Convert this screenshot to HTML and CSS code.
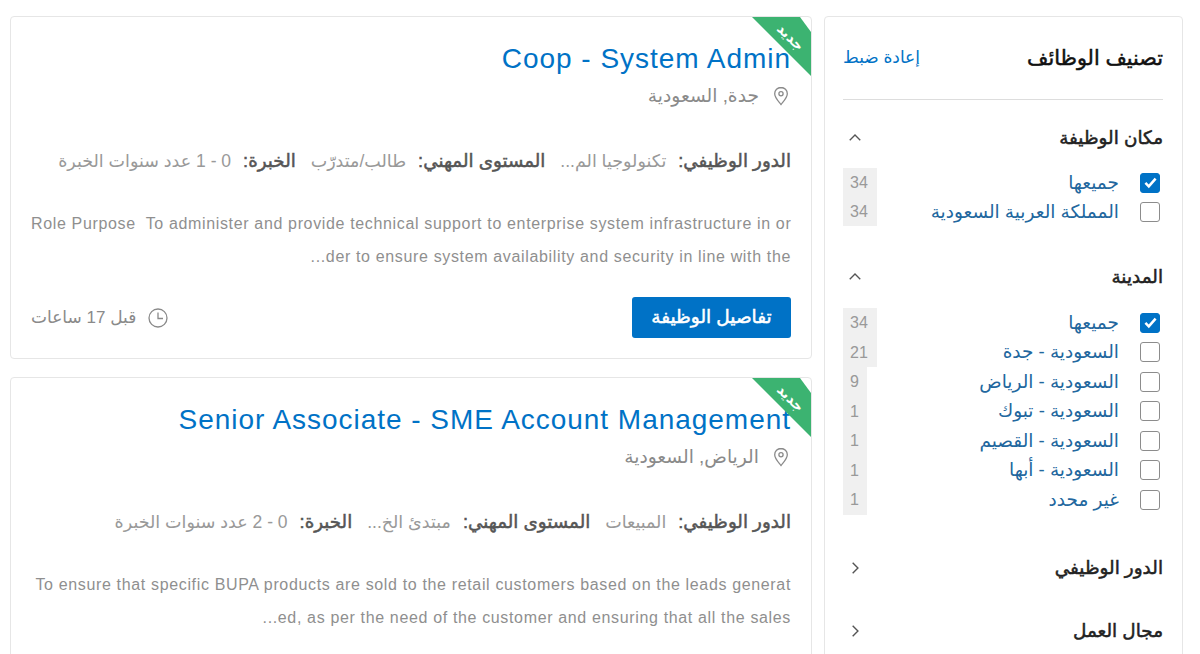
FILE: index.html
```html
<!DOCTYPE html>
<html lang="ar" dir="rtl">
<head>
    <meta charset="UTF-8">
    <title>الوظائف</title>
    <link rel="stylesheet" href="styles.css">
</head>
<body>
    <section class="page">
        <aside class="filters">
            <div class="filters_head">
                <h2>تصنيف الوظائف</h2>
                <a class="reset" href="#">إعادة ضبط</a>
            </div>

            <div class="group">
                <div class="group_head">
                    <h3>مكان الوظيفة</h3>
                    <svg class="chev" viewBox="0 0 12 12"><path d="M1.500 8 6 3.500 10.500 8"/></svg>
                </div>
                <ul class="options tight">
                    <li class="on"><span class="box"><svg viewBox="0 0 20 20"><path d="M4 10.500 8 14.500 16 5.500"/></svg></span><a href="#">جميعها</a><span class="count">34</span></li>
                    <li><span class="box"></span><a href="#">المملكة العربية السعودية</a><span class="count">34</span></li>
                </ul>
            </div>

            <div class="group city">
                <div class="group_head">
                    <h3>المدينة</h3>
                    <svg class="chev" viewBox="0 0 12 12"><path d="M1.500 8 6 3.500 10.500 8"/></svg>
                </div>
                <ul class="options">
                    <li class="on"><span class="box"><svg viewBox="0 0 20 20"><path d="M4 10.500 8 14.500 16 5.500"/></svg></span><a href="#">جميعها</a><span class="count">34</span></li>
                    <li><span class="box"></span><a href="#">السعودية - جدة</a><span class="count">21</span></li>
                    <li><span class="box"></span><a href="#">السعودية - الرياض</a><span class="count small">9</span></li>
                    <li><span class="box"></span><a href="#">السعودية - تبوك</a><span class="count small">1</span></li>
                    <li><span class="box"></span><a href="#">السعودية - القصيم</a><span class="count small">1</span></li>
                    <li><span class="box"></span><a href="#">السعودية - أبها</a><span class="count small">1</span></li>
                    <li><span class="box"></span><a href="#">غير محدد</a><span class="count small">1</span></li>
                </ul>
            </div>

            <div class="group closed">
                <div class="group_head">
                    <h3>الدور الوظيفي</h3>
                    <svg class="chev" viewBox="0 0 12 12"><path d="M4 1.500 8.500 6 4 10.500"/></svg>
                </div>
            </div>

            <div class="group closed">
                <div class="group_head">
                    <h3>مجال العمل</h3>
                    <svg class="chev" viewBox="0 0 12 12"><path d="M4 1.500 8.500 6 4 10.500"/></svg>
                </div>
            </div>
        </aside>

        <main class="jobs">
            <article class="job">
                <span class="ribbon"><span>جديد</span></span>
                <h1 dir="ltr"><a href="#">Coop - System Admin</a></h1>
                <p class="place">
                    <svg viewBox="0 0 20 20"><path d="M10 1.500c-3.600 0-6.300 2.700-6.300 6.200 0 4 4.100 7.900 6.300 10.800 2.200-2.900 6.300-6.800 6.300-10.800 0-3.500-2.700-6.200-6.300-6.200z"/><circle cx="10" cy="7.700" r="2.100"/></svg>
                    جدة, السعودية
                </p>
                <p class="meta">
                    <b>الدور الوظيفي:</b><span class="val">تكنولوجيا الم...</span>
                    <b>المستوى المهني:</b><span class="val">طالب/متدرّب</span>
                    <b>الخبرة:</b><span class="val">0 - 1 عدد سنوات الخبرة</span>
                </p>
                <p class="desc" dir="ltr">Role Purpose&nbsp; To administer and provide technical support to enterprise system infrastructure in or<br>...der to ensure system availability and security in line with the</p>
                <div class="job_foot">
                    <a class="details" href="#">تفاصيل الوظيفة</a>
                    <span class="time">
                        <svg viewBox="0 0 20 20"><circle cx="10" cy="10" r="9"/><path d="M10 4.500V10.500H15"/></svg>
                        قبل 17 ساعات
                    </span>
                </div>
            </article>

            <article class="job">
                <span class="ribbon"><span>جديد</span></span>
                <h1 dir="ltr"><a href="#">Senior Associate - SME Account Management</a></h1>
                <p class="place">
                    <svg viewBox="0 0 20 20"><path d="M10 1.500c-3.600 0-6.300 2.700-6.300 6.200 0 4 4.100 7.900 6.300 10.800 2.200-2.900 6.300-6.800 6.300-10.800 0-3.500-2.700-6.200-6.300-6.200z"/><circle cx="10" cy="7.700" r="2.100"/></svg>
                    الرياض, السعودية
                </p>
                <p class="meta">
                    <b>الدور الوظيفي:</b><span class="val">المبيعات</span>
                    <b>المستوى المهني:</b><span class="val">مبتدئ الخ...</span>
                    <b>الخبرة:</b><span class="val">0 - 2 عدد سنوات الخبرة</span>
                </p>
                <p class="desc" dir="ltr">To ensure that specific BUPA products are sold to the retail customers based on the leads generat<br>...ed, as per the need of the customer and ensuring that all the sales</p>
            </article>
        </main>
    </section>
</body>
</html>
```

FILE: styles.css
```css
* {
    margin: 0;
    padding: 0;
    box-sizing: border-box;
}

html, body {
    height: 654px;
    overflow: hidden;
}

body {
    background: #fff;
    font-family: "Liberation Sans", "DejaVu Sans", sans-serif;
}

a {
    text-decoration: none;
    color: #0072c6;
}

.page {
    display: flex;
    gap: 12px;
    height: 654px;
    overflow: hidden;
    padding: 16px 17px 0 10px;
}

/* sidebar */
.filters {
    flex: 0 0 359px;
    height: 660px;
    padding: 20px 19px 0 18px;
    border: 1px solid #e6e6e6;
    border-radius: 4px;
}

.filters_head {
    display: flex;
    justify-content: space-between;
    align-items: center;
    height: 63px;
    padding-bottom: 21px;
    margin-bottom: 22px;
    border-bottom: 1px solid #ddd;
}

/* regular weight with a thin stroke keeps the widths of the bold arabic in the design */
.filters_head h2 {
    font-size: 20.700px;
    font-weight: normal;
    color: #111;
    -webkit-text-stroke: 0.500px #111;
}

.reset {
    font-size: 17px;
}

.group {
    margin-bottom: 35px;
}

.group.city {
    margin-bottom: 37px;
}

.group.closed {
    margin-bottom: 31px;
}

.group_head {
    display: flex;
    justify-content: space-between;
    align-items: center;
    height: 32px;
}

.group_head h3 {
    font-size: 18.400px;
    font-weight: normal;
    color: #222;
    -webkit-text-stroke: 0.500px #222;
}

.chev {
    width: 14px;
    height: 14px;
    margin-left: 5px;
    fill: none;
    stroke: #555;
    stroke-width: 1.200;
}

.options {
    list-style: none;
    margin-top: 15px;
}

.options.tight {
    margin-top: 14px;
}

.options li {
    display: flex;
    align-items: center;
    height: 29.500px;
}

.options.tight li {
    height: 29px;
}

.box {
    flex: none;
    width: 20px;
    height: 20px;
    margin: 0 3px 0 0;
    border: 1.500px solid #8c8c8c;
    border-radius: 3px;
}

.on .box {
    background: #0072c6;
    border-color: #0072c6;
}

.box svg {
    display: block;
    width: 17px;
    height: 17px;
    fill: none;
    stroke: #fff;
    stroke-width: 3;
}

.options a {
    margin-right: 21px;
    font-size: 18.500px;
    color: #22679e;
}

.count {
    margin-right: auto;
    align-self: stretch;
    width: 34px;
    padding-left: 7px;
    background: #f0f0f0;
    color: #999;
    font-size: 16px;
    line-height: 29px;
    text-align: left;
    direction: ltr;
}

.count.small {
    width: 24px;
}

/* job cards */
.jobs {
    flex: 1;
    min-width: 0;
    display: flex;
    flex-direction: column;
    gap: 18px;
}

.job {
    position: relative;
    flex: none;
    height: 343px;
    padding: 22px 20px 0;
    border: 1px solid #e6e6e6;
    border-radius: 4px;
}

.ribbon {
    position: absolute;
    top: 0;
    right: 0;
    width: 59px;
    height: 59px;
    background: #3cb371;
    clip-path: polygon(0 0, 48px 0, 59px 15px, 59px 100%);
}

.ribbon span {
    position: absolute;
    top: 12px;
    right: 4px;
    color: #fff;
    font-size: 14px;
    font-weight: bold;
    transform: rotate(45deg);
}

.job h1 {
    font-size: 28px;
    font-weight: normal;
    line-height: 40px;
    letter-spacing: 0.970px;
    text-align: right;
}

.place {
    display: flex;
    align-items: center;
    gap: 12px;
    height: 23px;
    margin-top: 5px;
    color: #8a8a8a;
    font-size: 18.700px;
}

.place svg {
    width: 20px;
    height: 20px;
    fill: none;
    stroke: #8a8a8a;
    stroke-width: 1.300;
}

.meta {
    margin-top: 43px;
    font-size: 17.500px;
    color: #999;
    white-space: nowrap;
}

.meta b {
    color: #555;
    font-size: 18.300px;
    font-weight: normal;
    -webkit-text-stroke: 0.500px #555;
    margin-left: 12px;
}

.val {
    margin-left: 10px;
}

.desc {
    margin-top: 35px;
    font-size: 16px;
    line-height: 33px;
    letter-spacing: 0.650px;
    color: #8f8f8f;
    text-align: right;
    white-space: nowrap;
}

.job_foot {
    display: flex;
    justify-content: space-between;
    align-items: center;
    margin-top: 24px;
}

.details {
    width: 159px;
    height: 41px;
    border-radius: 3px;
    background: #0072c6;
    color: #fff;
    font-size: 18.500px;
    -webkit-text-stroke: 0.500px #fff;
    line-height: 40px;
    text-align: center;
}

.time {
    display: flex;
    align-items: center;
    gap: 12px;
    color: #8a8a8a;
    font-size: 17px;
}

.time svg {
    width: 20px;
    height: 20px;
    fill: none;
    stroke: #8a8a8a;
    stroke-width: 1.300;
}
```
